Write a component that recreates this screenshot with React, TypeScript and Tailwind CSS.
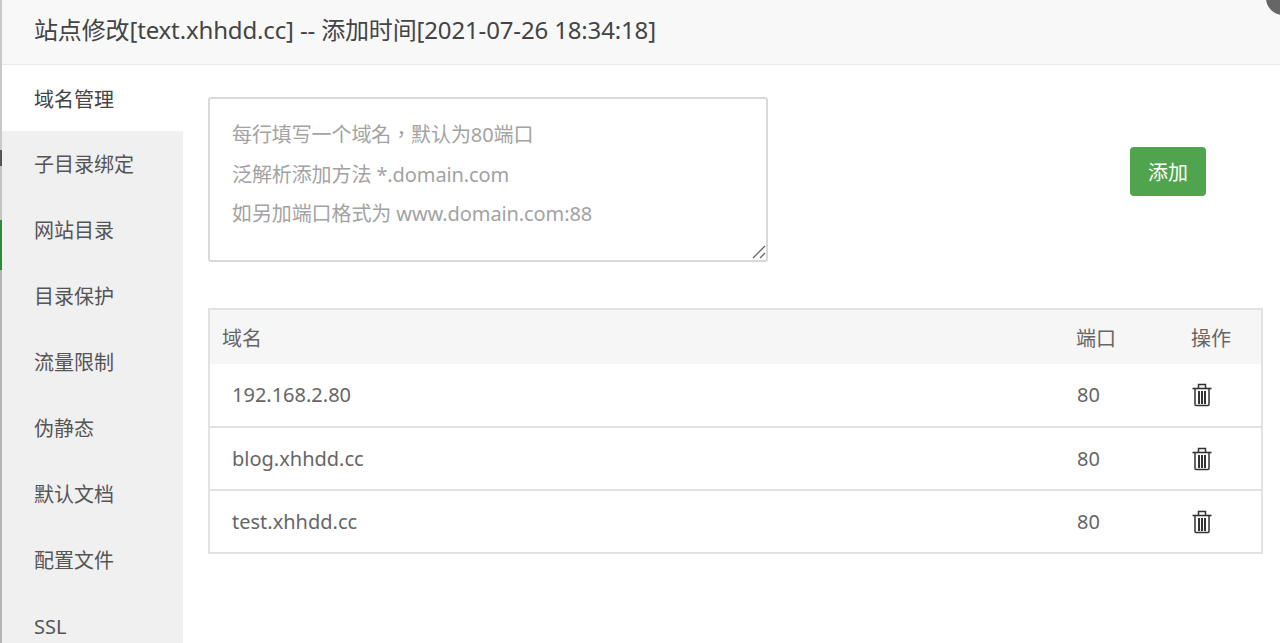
const fontStack = '[font-family:"Noto_Sans","Noto_Sans_CJK_SC",sans-serif]';

const tabs = ['子目录绑定', '网站目录', '目录保护', '流量限制', '伪静态', '默认文档', '配置文件', 'SSL'];
const domains = ['192.168.2.80', 'blog.xhhdd.cc', 'test.xhhdd.cc'];

function TrashIcon() {
  return (
    <svg width="20" height="24" viewBox="0 0 20 24" fill="none" stroke="#333" className="block">
      <path d="M0.5 5.5h19" strokeWidth="1.6" />
      <path d="M6.5 5V1.5h7V5" strokeWidth="1.5" />
      <path d="M3 6v15.5a1 1 0 0 0 1 1h12a1 1 0 0 0 1-1V6" strokeWidth="1.5" />
      <path d="M7 8v13M10 8v13M13 8v13" strokeWidth="2" />
    </svg>
  );
}

function EdgeStrip() {
  return (
    <div className="flex w-[2px] shrink-0 flex-col bg-[#b5b5b5]">
      <div className="h-[150px] shrink-0 bg-[#c9c9c9]" />
      <div className="h-[16px] shrink-0 bg-[#555]" />
      <div className="h-[54px] shrink-0 bg-[#c4c4c4]" />
      <div className="h-[50px] shrink-0 bg-[#2f8a3c]" />
    </div>
  );
}

export default function App() {
  return (
    <div className={`relative flex h-[643px] w-[1280px] overflow-hidden bg-white ${fontStack}`}>
      <EdgeStrip />
      <div className="flex min-w-0 flex-1 flex-col">
        {/* Title bar */}
        <div className="flex h-[65px] shrink-0 items-center border-b border-[#e9e9e9] bg-[#f8f8f8] pb-[4px] pl-[32px] text-[24px] tracking-[-0.15px] text-[#444]">
          站点修改[text.xhhdd.cc] -- 添加时间[2021-07-26 18:34:18]
        </div>
        <div className="flex min-h-0 flex-1">
          {/* Side tabs */}
          <div className="flex w-[181px] shrink-0 flex-col bg-[#f0f0f0] text-[20px] text-[#555]">
            <div className="flex h-[66px] shrink-0 items-center bg-white pl-[32px] pt-[3px] text-[#444]">域名管理</div>
            {tabs.map(tab => (
              <div key={tab} className="flex h-[66px] shrink-0 items-center pl-[32px] pt-[2px]">
                {tab}
              </div>
            ))}
          </div>
          {/* Content */}
          <div className="min-w-0 flex-1 pl-[25px] pr-[17px] pt-[32px]">
            <div className="flex items-start">
              <div className="relative">
                <textarea
                  className='block h-[165px] w-[560px] resize-none rounded-[3px] border-2 border-[#d9d9d9] px-[22px] pt-[16px] text-[20px] leading-[39.5px] tracking-[-0.1px] outline-none [font-family:"Noto_Sans","Noto_Sans_CJK_TC",sans-serif] placeholder:text-[#a3a3a3]'
                  placeholder={'每行填写一个域名，默认为80端口\n泛解析添加方法 *.domain.com\n如另加端口格式为 www.domain.com:88'}
                />
                {/* resize grip */}
                <svg width="16" height="16" viewBox="0 0 16 16" stroke="#666" strokeWidth="1.3" className="pointer-events-none absolute bottom-[2px] right-[1px]">
                  <path d="M2 14 14 2M9 14l5-5" />
                </svg>
              </div>
              <button className="ml-[362px] mt-[50px] flex h-[49px] w-[76px] items-center justify-center rounded-[4px] bg-[#4fa44d] pt-[3px] text-[20px] text-white">
                添加
              </button>
            </div>
            <table className="mt-[46px] w-[1055px] table-fixed border-collapse border-2 border-[#e2e2e2] text-[20px] text-[#666]">
              <thead>
                <tr className="h-[55px] bg-[#f6f6f6]">
                  <th className="pl-[12px] pt-[4px] text-left font-normal">域名</th>
                  <th className="w-[115px] pt-[4px] text-left font-normal">端口</th>
                  <th className="w-[71px] pt-[4px] text-left font-normal">操作</th>
                </tr>
              </thead>
              <tbody>
                {domains.map((domain, i) => (
                  <tr key={domain} className={`h-[63px] border-[#e2e2e2] ${i > 0 ? 'border-t-2' : ''}`}>
                    <td className="pl-[22px]">{domain}</td>
                    <td className="pl-px">80</td>
                    <td>
                      <div className="pl-px">
                        <TrashIcon />
                      </div>
                    </td>
                  </tr>
                ))}
              </tbody>
            </table>
          </div>
        </div>
      </div>
      {/* Close button, cut off by the window corner */}
      <div className="absolute -right-[20px] -top-[19px] h-[34px] w-[34px] rounded-full bg-[#666]" />
    </div>
  );
}
